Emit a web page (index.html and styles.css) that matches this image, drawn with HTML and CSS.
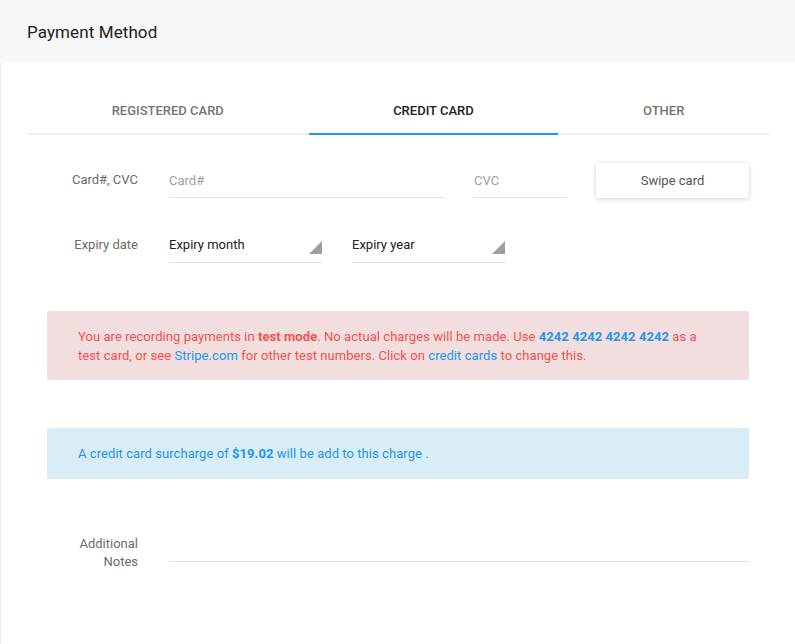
FILE: index.html
```html
<!DOCTYPE html>
<html>
<head>
<meta charset="utf-8">
<link rel="stylesheet" href="styles.css">
</head>
<body>
<header class="header">Payment Method</header>
<main class="content">
  <nav class="tabs">
    <div class="tab">Registered card</div>
    <div class="tab active">Credit card</div>
    <div class="tab">Other</div>
  </nav>
  <section class="form">
    <div class="row row-card">
      <div class="label">Card#, CVC</div>
      <div class="fields">
        <div class="input card-num placeholder">Card#</div>
        <div class="input cvc placeholder">CVC</div>
        <button class="swipe">Swipe card</button>
      </div>
    </div>
    <div class="row row-expiry">
      <div class="label">Expiry date</div>
      <div class="fields">
        <div class="input select">Expiry month<span class="caret"></span></div>
        <div class="input select">Expiry year<span class="caret"></span></div>
      </div>
    </div>
    <div class="alert alert-danger">You are recording payments in <b>test mode</b>. No actual charges will be made. Use <b class="link">4242 4242 4242 4242</b> as a test card, or see <span class="link">Stripe.com</span> for other test numbers. Click on <span class="link">credit cards</span> to change this.</div>
    <div class="alert alert-info">A credit card surcharge of <b>$19.02</b> will be add to this charge .</div>
    <div class="row row-notes">
      <div class="label">Additional Notes</div>
      <div class="fields">
        <div class="input notes"></div>
      </div>
    </div>
  </section>
</main>
</body>
</html>
```

FILE: styles.css
```css
html, body {
  margin: 0;
  padding: 0;
  background: #fff;
  font-family: Roboto, "Liberation Sans", sans-serif;
}
.header {
  height: 62px;
  box-sizing: border-box;
  background: #f7f7f7;
  padding: 21px 27px 0;
  font-size: 17px;
  letter-spacing: 0.1px;
  color: #212121;
  line-height: 22px;
}
.content {
  border-left: 1px solid #eeeeee;
  padding: 27px 26px 40px 26px;
  min-height: 582px;
  box-sizing: border-box;
}
.tabs {
  display: flex;
  border-bottom: 2px solid #eeeeee;
}
.tab {
  flex: 1 1 auto;
  text-align: center;
  font-size: 13px;
  font-weight: 500;
  text-transform: uppercase;
  color: #757575;
  line-height: 44px;
  height: 44px;
  margin-bottom: -2px;
  border-bottom: 2px solid transparent;
}
.tab.active {
  color: #212121;
  border-bottom-color: #2196f3;
}
.form {
  padding: 0 20px;
}
.row {
  display: flex;
  gap: 31px;
}
.label {
  width: 91px;
  flex: none;
  text-align: right;
  font-size: 13px;
  color: #6b6b6b;
  line-height: 18px;
}
.fields {
  flex: 1;
  display: flex;
  gap: 30px;
  align-items: flex-start;
}
.input {
  box-sizing: border-box;
  height: 35px;
  border-bottom: 1px solid #e0e0e0;
  font-size: 13px;
  line-height: 18px;
  padding-top: 9px;
  color: #212121;
  position: relative;
}
.placeholder { color: #9e9e9e; }
.row-card {
  margin-top: 28px;
}
.row-card .label { padding-top: 8px; }
.card-num { width: 275px; }
.cvc { width: 92px; }
.swipe {
  width: 153px;
  height: 35px;
  border: none;
  border-radius: 3px;
  background: #fff;
  box-shadow: 0 1px 5px rgba(0,0,0,0.2);
  font-family: inherit;
  font-size: 13px;
  color: #555;
  padding: 0;
}
.row-expiry {
  margin-top: 30px;
}
.row-expiry .label { padding-top: 8px; }
.select { width: 153px; padding-top: 8px; }
.caret {
  position: absolute;
  right: 0;
  top: 13px;
  width: 0;
  height: 0;
  border-left: 13px solid transparent;
  border-bottom: 13px solid #9e9e9e;
}
.alert {
  border-radius: 2px;
  font-size: 13px;
  line-height: 19px;
  letter-spacing: 0.06px;
  padding: 16px 40px 15px 31px;
}
.alert-danger {
  margin-top: 48px;
  background: #f2dede;
  color: #f1514c;
}
.alert-info {
  margin-top: 48px;
  background: #d9edf7;
  color: #2196f3;
  padding-bottom: 16px;
}
.link { color: #2196f3; }
.alert b { font-weight: 700; }
.row-notes {
  margin-top: 56px;
}
.notes {
  flex: 1;
  height: 27px;
}
```
